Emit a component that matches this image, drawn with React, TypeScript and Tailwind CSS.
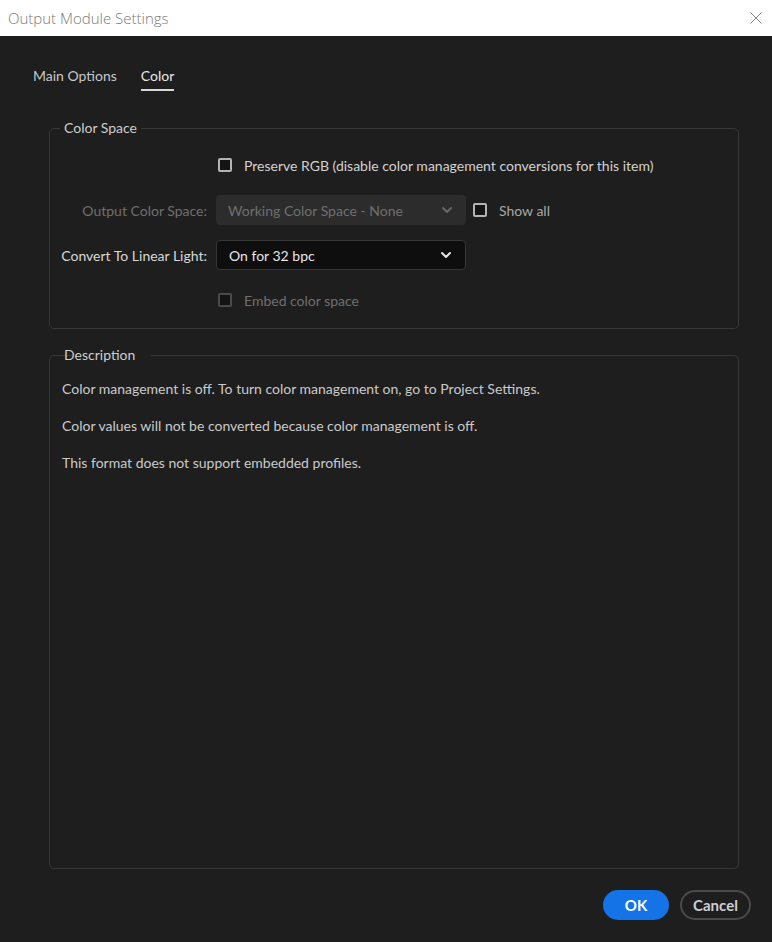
import { ChevronDown } from 'lucide-react';

function Checkbox({ disabled }: { disabled?: boolean }) {
  return (
    <span
      className={`inline-block w-[14px] h-[14px] rounded-[2px] border-2 bg-[#141414] ${
        disabled ? 'border-[#4a4a4a]' : 'border-[#b4b4b4]'
      }`}
    />
  );
}

function Dropdown({ value, disabled }: { value: string; disabled?: boolean }) {
  return (
    <div
      className={`flex items-center justify-between h-[30px] w-[250px] rounded-[4px] pl-3 pr-[11px] ${
        disabled
          ? 'bg-[#2c2c2c] text-[#6f6f6f]'
          : 'bg-[#0e0e0e] border border-[#363636] text-[#e6e6e6]'
      }`}
    >
      <span>{value}</span>
      <ChevronDown
        size={16}
        strokeWidth={3}
        className={disabled ? 'text-[#666666]' : 'text-[#e6e6e6]'}
      />
    </div>
  );
}

export default function App() {
  return (
    <div
      className="w-[772px] h-[942px] flex flex-col bg-[#1e1e1e] text-[14px] text-[#cdcdcd]"
      style={{ fontFamily: 'Lato, "Noto Sans", sans-serif' }}
    >
      <div className="h-[36px] shrink-0 bg-white flex items-center justify-between pl-2 pr-[10px]">
        <span
          className="text-[15px] text-[#7a7a7a] font-light"
          style={{ fontFamily: '"Open Sans", sans-serif' }}
        >
          Output Module Settings
        </span>
        <svg width="12" height="12" viewBox="0 0 12 12" className="text-[#8a8a8a]">
          <path d="M0.5 0.5 L11.5 11.5 M11.5 0.5 L0.5 11.5" stroke="currentColor" strokeWidth="1" />
        </svg>
      </div>

      <div className="flex gap-[24px] pl-[33px] pt-[29px]">
        <div className="text-[#c8c8c8]">Main Options</div>
        <div className="text-[#e8e8e8] border-b-2 border-[#d8d8d8] pb-[3px]">Color</div>
      </div>

      <div className="flex-1 flex flex-col pt-[27px] pb-[21px] pl-[49px] pr-[33px]">
        <fieldset className="border border-[#383838] rounded-[5px] pl-0 pr-0 pt-[12px] pb-[13px]">
          <legend className="ml-[10px] px-[4px] text-[#cdcdcd] leading-[20px]">Color Space</legend>
          <div className="grid grid-cols-[157px_auto_auto_1fr] gap-x-[9px] gap-y-[15px] items-center">
            <div />
            <div className="col-span-3 flex items-center gap-3 h-[30px] pl-[2px]">
              <Checkbox />
              <span className="text-[#d2d2d2]">Preserve RGB (disable color management conversions for this item)</span>
            </div>

            <div className="text-right text-[#6f6f6f]">Output Color Space:</div>
            <Dropdown value="Working Color Space - None" disabled />
            <div className="flex items-center gap-3 -ml-[2px]">
              <Checkbox />
              <span className="text-[#a8a8a8]">Show all</span>
            </div>
            <div />

            <div className="text-right text-[#d8d8d8]">Convert To Linear Light:</div>
            <Dropdown value="On for 32 bpc" />
            <div />
            <div />

            <div />
            <div className="col-span-3 flex items-center gap-3 h-[30px] pl-[2px]">
              <Checkbox disabled />
              <span className="text-[#6f6f6f]">Embed color space</span>
            </div>
          </div>
        </fieldset>

        <fieldset className="flex-1 mt-[16px] border border-[#383838] rounded-[5px] pl-3 pt-[14px]">
          <legend className="ml-[10px] px-[4px] -translate-x-3 text-[#cdcdcd] leading-[20px]">Description</legend>
          <div className="flex flex-col gap-[17px] leading-[20px] text-[#cacaca]">
            <p>Color management is off. To turn color management on, go to Project Settings.</p>
            <p>Color values will not be converted because color management is off.</p>
            <p>This format does not support embedded profiles.</p>
          </div>
        </fieldset>
      </div>

      <div className="flex justify-end gap-[11px] pr-[21px] pb-[22px]">
        <button className="h-[30px] w-[66px] rounded-full bg-[#1473e6] text-white font-bold text-[15px]">
          OK
        </button>
        <button className="h-[30px] w-[71px] rounded-full border-2 border-[#4b4b4b] text-[#cfcfcf] font-bold text-[15px]">
          Cancel
        </button>
      </div>
    </div>
  );
}
